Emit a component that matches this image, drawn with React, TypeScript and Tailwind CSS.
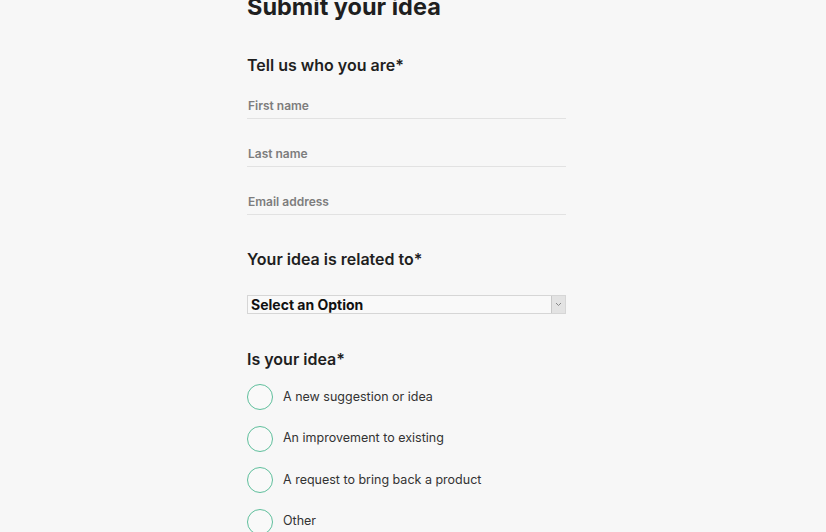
import React from "react";

const fields = ["First name", "Last name", "Email address"];

const options = [
  "A new suggestion or idea",
  "An improvement to existing",
  "A request to bring back a product",
  "Other",
];

export default function App() {
  return (
    <div className="h-[532px] w-[826px] overflow-hidden bg-[#f7f7f7] font-['Inter',sans-serif] text-[#222]">
      <div className="ml-[247px] w-[319px] -mt-[7px]">
        <h1 className="text-[23.5px] font-bold leading-[28px] text-[#1f1f1f]">Submit your idea</h1>

        <h2 className="mt-[33px] text-[16px] font-semibold leading-[22px] text-[#1f1f1f]">Tell us who you are*</h2>

        <div className="mt-[13px] flex flex-col gap-[18px]">
          {fields.map((f) => (
            <div key={f} className="flex h-[30px] items-end border-b border-[#e2e2e2] pb-[3px]">
              <span className="pl-px text-[12px] font-semibold text-[#7d7d7d]">{f}</span>
            </div>
          ))}
        </div>

        <h2 className="mt-[33px] text-[16px] font-semibold leading-[22px] text-[#1f1f1f]">Your idea is related to*</h2>

        <div className="mt-[25px] flex h-[19px] items-center border border-[#d6d6d6] bg-[#f9f9f9]">
          <span className="flex-1 pl-[3px] text-[14px] font-bold leading-none text-[#111]">Select an Option</span>
          <div className="flex h-full w-[14px] items-center justify-center border-l border-[#c8c8c8] bg-[#e3e3e3]">
            <svg width="7" height="5" viewBox="0 0 7 5" fill="none">
              <path d="M1 1l2.5 2.5L6 1" stroke="#888" strokeWidth="1" />
            </svg>
          </div>
        </div>

        <h2 className="mt-[34px] text-[16px] font-semibold leading-[22px] text-[#1f1f1f]">Is your idea*</h2>

        <div className="mt-[14px] flex flex-col gap-[15.5px]">
          {options.map((o) => (
            <label key={o} className="flex items-center gap-[10px]">
              <span className="h-[26px] w-[26px] rounded-full border border-[#5fbf9c] bg-[#f9f9f9]" />
              <span className="text-[12.5px] text-[#333]">{o}</span>
            </label>
          ))}
        </div>
      </div>
    </div>
  );
}
